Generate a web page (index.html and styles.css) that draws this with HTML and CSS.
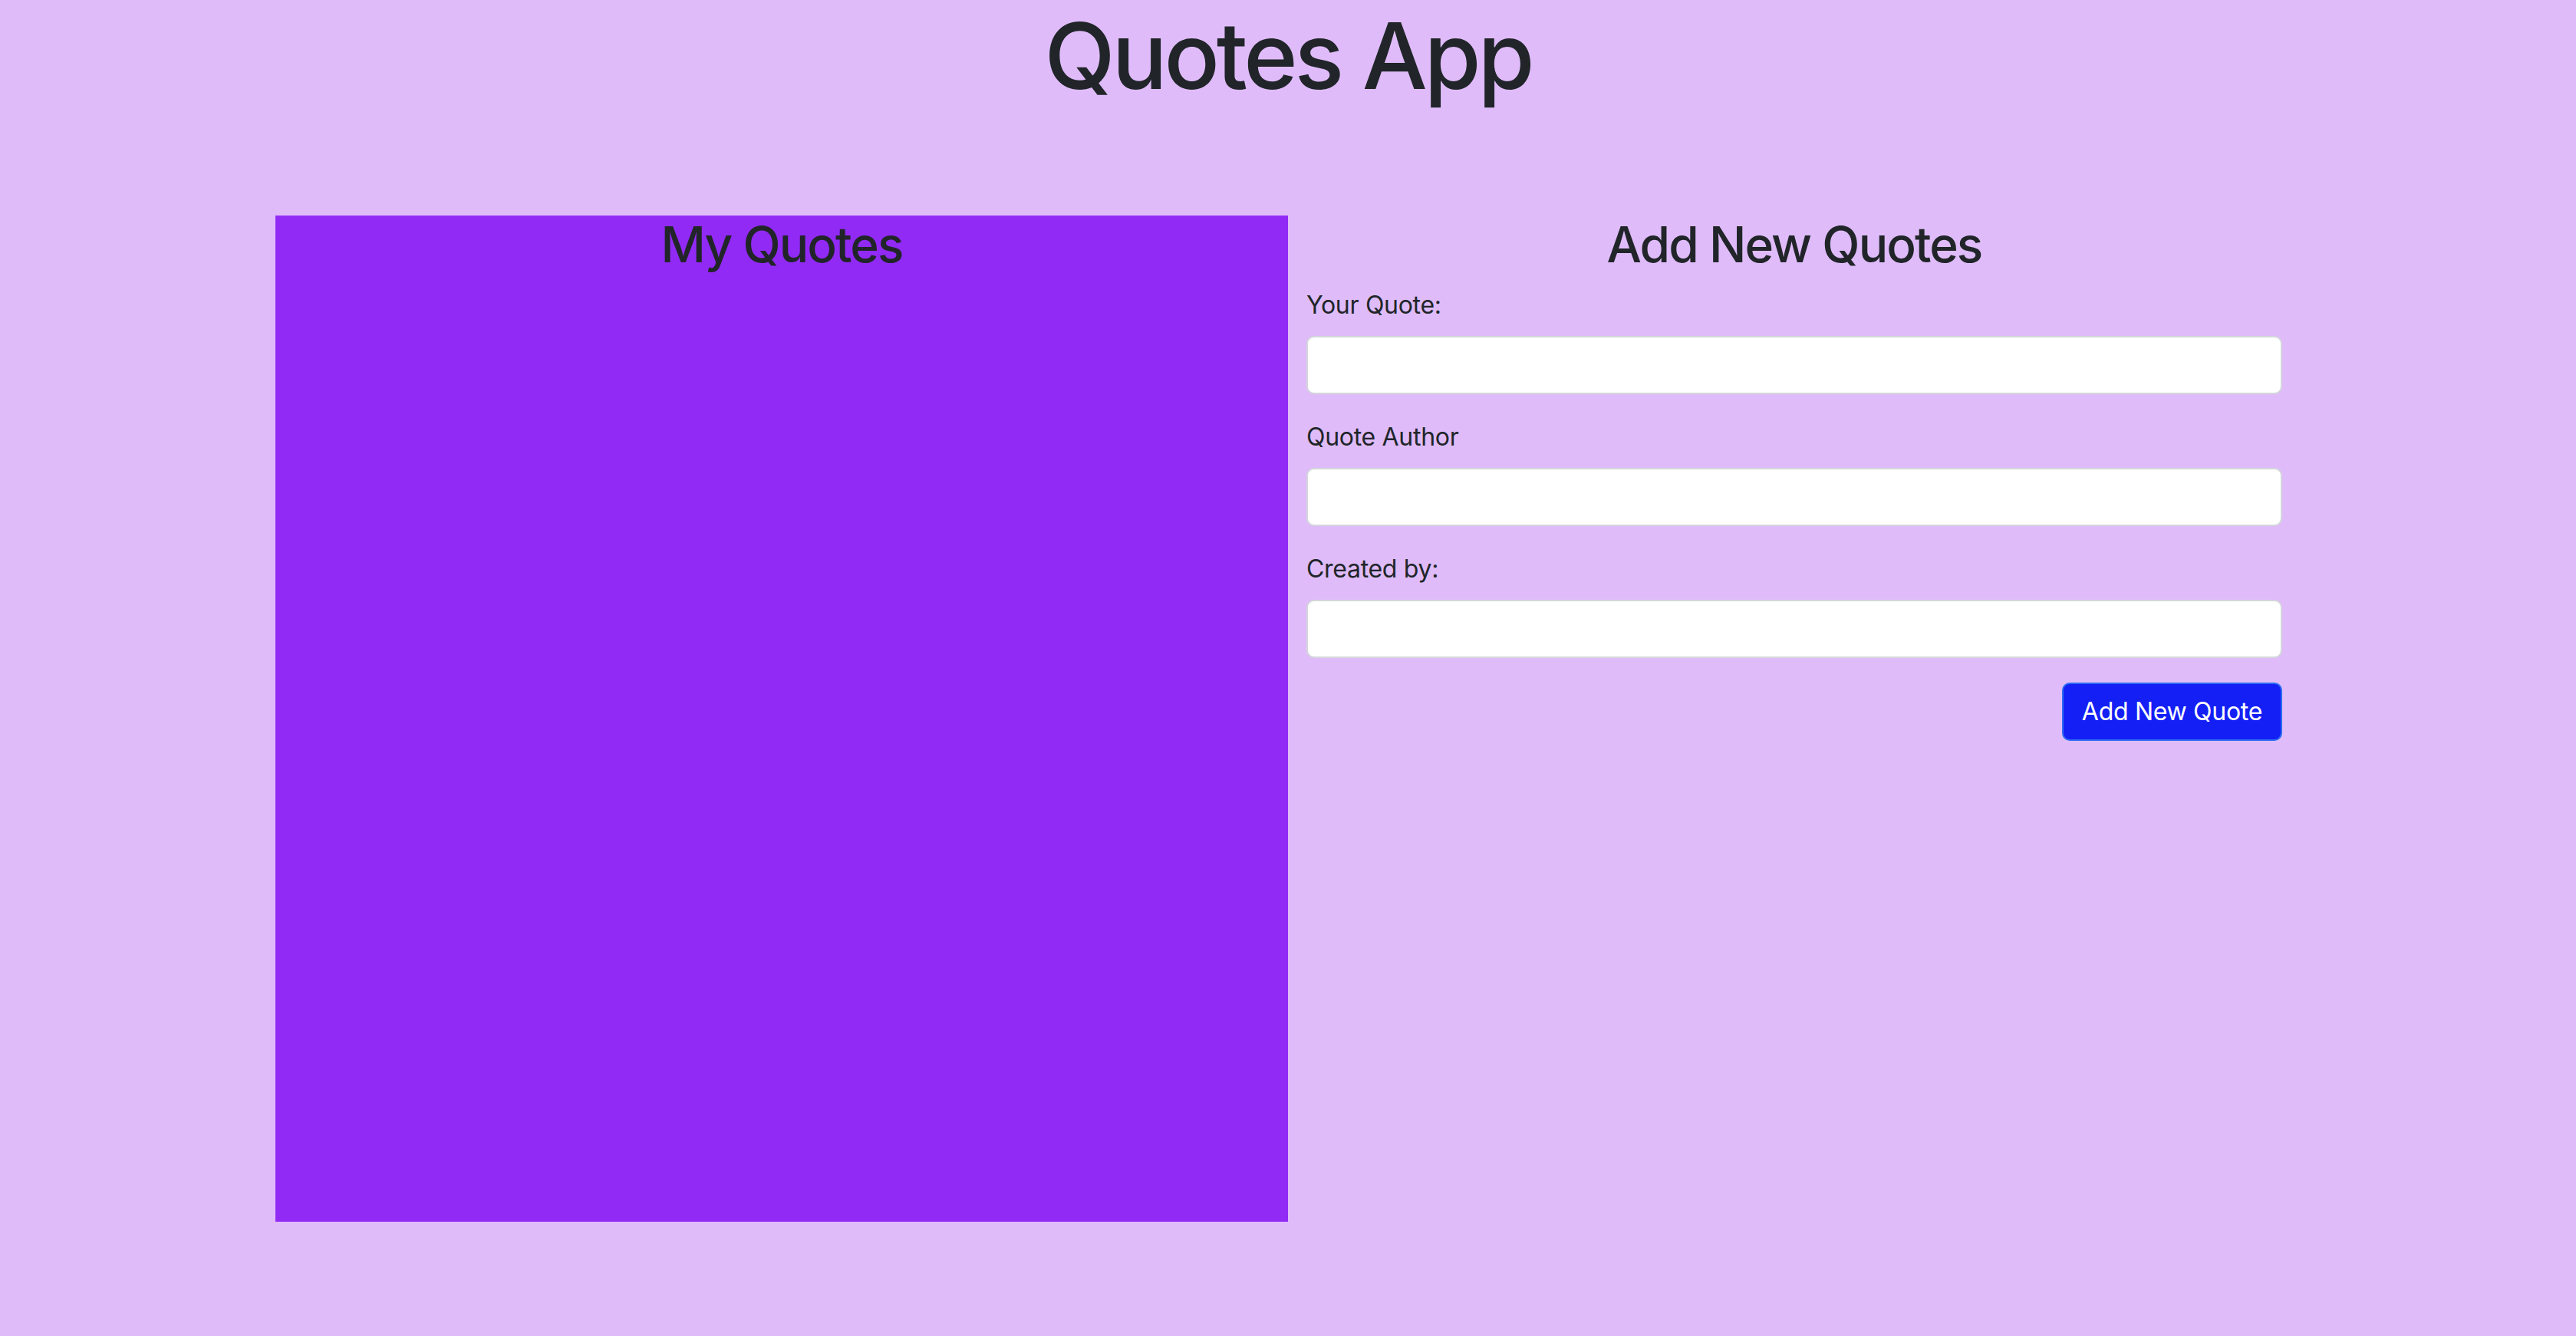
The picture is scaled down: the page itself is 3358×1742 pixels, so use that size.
FILE: index.html
```html
<!DOCTYPE html>
<html lang="en">
<head>
<meta charset="utf-8">
<title>Quotes App</title>
<link rel="stylesheet" href="styles.css">
</head>
<body>
  <h1 class="title">Quotes App</h1>
  <div class="container">
    <div class="row">
      <section class="col list-col">
        <h2 class="heading">My Quotes</h2>
      </section>
      <section class="col form-col">
        <h2 class="heading">Add New Quotes</h2>
        <form class="quote-form">
          <div class="field">
            <label class="label" for="q">Your Quote:</label>
            <input class="input" id="q" type="text">
          </div>
          <div class="field">
            <label class="label" for="a">Quote Author</label>
            <input class="input" id="a" type="text">
          </div>
          <div class="field">
            <label class="label" for="c">Created by:</label>
            <input class="input" id="c" type="text">
          </div>
          <div class="actions">
            <button class="btn" type="button">Add New Quote</button>
          </div>
        </form>
      </section>
    </div>
  </div>
</body>
</html>
```

FILE: styles.css
```css
* { box-sizing: border-box; }

html, body {
  margin: 0;
  padding: 0;
}

body {
  background: #dfbcf9;
  color: #212529;
  font-family: Inter, "Noto Sans", sans-serif;
  font-size: 32px;
  line-height: 1.5;
  letter-spacing: -0.3px;
  min-height: 1742px;
}

.title {
  margin: 0;
  text-align: center;
  font-size: 120px;
  font-weight: 500;
  line-height: 1.21;
  letter-spacing: -0.035em;
}

.container {
  width: 2640px;
  margin: 136px auto 0;
}

.row {
  display: flex;
}

.col {
  width: 50%;
}

.list-col {
  background: #922af6;
  height: 1312px;
}

.form-col {
  padding: 0 24px;
}

.heading {
  margin: 0 0 16px;
  text-align: center;
  font-size: 64px;
  font-weight: 500;
  line-height: 1.2;
  letter-spacing: -0.03em;
}

.field {
  margin-bottom: 32px;
}

.label {
  display: block;
  margin-bottom: 16px;
  font-size: 32px;
  line-height: 1.5;
}

.input {
  display: block;
  width: 100%;
  height: 76px;
  padding: 12px 24px;
  font: inherit;
  background: #fff;
  border: 2px solid #d3d6da;
  border-radius: 10px;
}

.actions {
  display: flex;
  justify-content: flex-end;
}

.btn {
  height: 76px;
  padding: 12px 24px;
  font-family: inherit;
  font-size: 32px;
  line-height: 1.5;
  letter-spacing: -0.3px;
  color: #fff;
  background: #131ff5;
  border: 2px solid #2b6cf2;
  border-radius: 10px;
}
```
